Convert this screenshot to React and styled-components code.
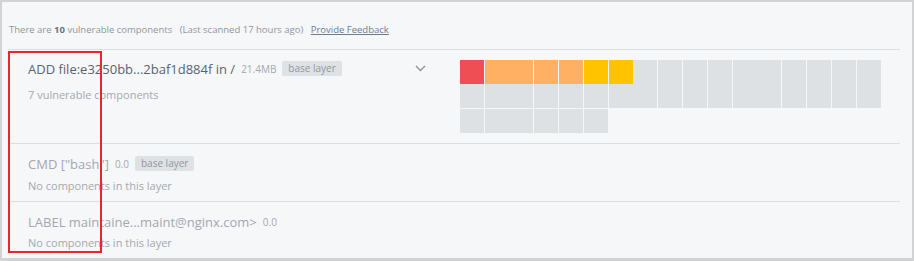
import React from "react";
import styled, { createGlobalStyle } from "styled-components";

const Global = createGlobalStyle`
  html, body { margin: 0; padding: 0; background: #f6f7f9; }
  body { font-family: "Open Sans", "Liberation Sans", sans-serif; }
  * { box-sizing: border-box; }
`;

const Frame = styled.div`
  position: relative;
  width: 914px;
  height: 261px;
  background: #f6f7f9;
  border: 2px solid #d2d3d5;
  border-bottom-width: 3px;
  padding: 0 12px 0 6px;
  overflow: hidden;
`;

const Header = styled.div`
  padding: 21px 0 12px 1px;
  font-size: 9.5px;
  line-height: 14px;
  color: #9096a0;
  border-bottom: 1px solid #dcdee1;
  white-space: nowrap;
`;

const Strong = styled.b`
  font-weight: 700;
  color: #6c737d;
`;

const Spacer = styled.span`
  display: inline-block;
  width: ${(p) => p.$w}px;
`;

const Feedback = styled.a`
  color: #6e7b8d;
  text-decoration: underline;
  cursor: pointer;
`;

const Row = styled.div`
  display: flex;
  align-items: flex-start;
  padding: ${(p) => p.$pt}px 0 ${(p) => p.$pb}px 20px;
  border-bottom: ${(p) => (p.$last ? "none" : "1px solid #dcdee1")};
`;

const Info = styled.div`
  flex: 0 0 432px;
  padding-right: 34px;
  display: flex;
  flex-direction: column;
  gap: ${(p) => p.$gap}px;
`;

const TitleLine = styled.div`
  display: flex;
  align-items: center;
  height: 17px;
  white-space: nowrap;
`;

const Title = styled.span`
  font-size: 13px;
  color: ${(p) => (p.$active ? "#5b6371" : "#a2a8b1")};
`;

const Size = styled.span`
  font-size: 10px;
  color: #a3a9b1;
  margin-left: 6px;
`;

const Badge = styled.span`
  margin-left: 6px;
  height: 15px;
  line-height: 15px;
  padding: 0 6px;
  background: #dfe2e5;
  color: #8f969f;
  font-size: 10px;
  border-radius: 2px;
`;

const Chevron = styled.svg`
  margin-left: auto;
  flex: 0 0 auto;
`;

const Sub = styled.div`
  font-size: 11px;
  line-height: 16px;
  color: #a3a9b1;
`;

const Map = styled.div`
  width: 430px;
  display: flex;
  flex-wrap: wrap;
  align-items: flex-start;
  gap: 1px;
`;

const Cell = styled.div`
  width: ${(p) => p.$w}px;
  height: ${(p) => p.$h}px;
  background: #dee1e4;
  display: flex;
  flex-direction: column;
`;

const Fill = styled.div`
  width: ${(p) => p.$w}px;
  height: 24px;
  background: ${(p) => p.$c};
`;

const Annotation = styled.div`
  position: absolute;
  left: 6px;
  top: 49px;
  width: 94px;
  height: 202px;
  border: 2px solid #f0222a;
  pointer-events: none;
`;

const RED = "#ee4e54";
const ORANGE = "#ffb062";
const YELLOW = "#ffc300";

const cells = [
  { w: 24, h: 48, c: RED, fw: 24 },
  { w: 48, h: 48, c: ORANGE, fw: 48 },
  { w: 24, h: 48, c: ORANGE, fw: 24 },
  { w: 24, h: 48, c: ORANGE, fw: 24 },
  { w: 24, h: 48, c: YELLOW, fw: 24 },
  { w: 48, h: 48, c: YELLOW, fw: 24 },
  { w: 24, h: 48 },
  { w: 24, h: 48 },
  { w: 24, h: 48 },
  { w: 48, h: 48 },
  { w: 24, h: 48 },
  { w: 24, h: 48 },
  { w: 24, h: 48 },
  { w: 24, h: 48 },
  { w: 24, h: 24 },
  { w: 48, h: 24 },
  { w: 24, h: 24 },
  { w: 24, h: 24 },
  { w: 24, h: 24 },
];

export default function App() {
  return (
    <>
      <Global />
      <Frame>
        <Header>
          There are <Strong>10</Strong> vulnerable components
          <Spacer $w={5} /> (Last scanned 17 hours ago)
          <Spacer $w={5} /> <Feedback>Provide Feedback</Feedback>
        </Header>

        <Row $pt={10} $pb={10}>
          <Info $gap={10}>
            <TitleLine>
              <Title $active>ADD file:e3250bb...2baf1d884f in /</Title>
              <Size>21.4MB</Size>
              <Badge>base layer</Badge>
              <Chevron width="11" height="7" viewBox="0 0 11 7">
                <path d="M1 1l4.5 4.5L10 1" fill="none" stroke="#8d949e" strokeWidth="1.4" />
              </Chevron>
            </TitleLine>
            <Sub>7 vulnerable components</Sub>
          </Info>
          <Map>
            {cells.map((c, i) => (
              <Cell key={i} $w={c.w} $h={c.h}>
                {c.c && <Fill $w={c.fw} $c={c.c} />}
              </Cell>
            ))}
          </Map>
        </Row>

        <Row $pt={11} $pb={7}>
          <Info $gap={6}>
            <TitleLine>
              <Title>CMD ["bash"]</Title>
              <Size>0.0</Size>
              <Badge>base layer</Badge>
            </TitleLine>
            <Sub>No components in this layer</Sub>
          </Info>
        </Row>

        <Row $pt={11} $pb={7} $last>
          <Info $gap={5}>
            <TitleLine>
              <Title>LABEL maintaine...maint@nginx.com&gt;</Title>
              <Size>0.0</Size>
            </TitleLine>
            <Sub>No components in this layer</Sub>
          </Info>
        </Row>

        <Annotation />
      </Frame>
    </>
  );
}
